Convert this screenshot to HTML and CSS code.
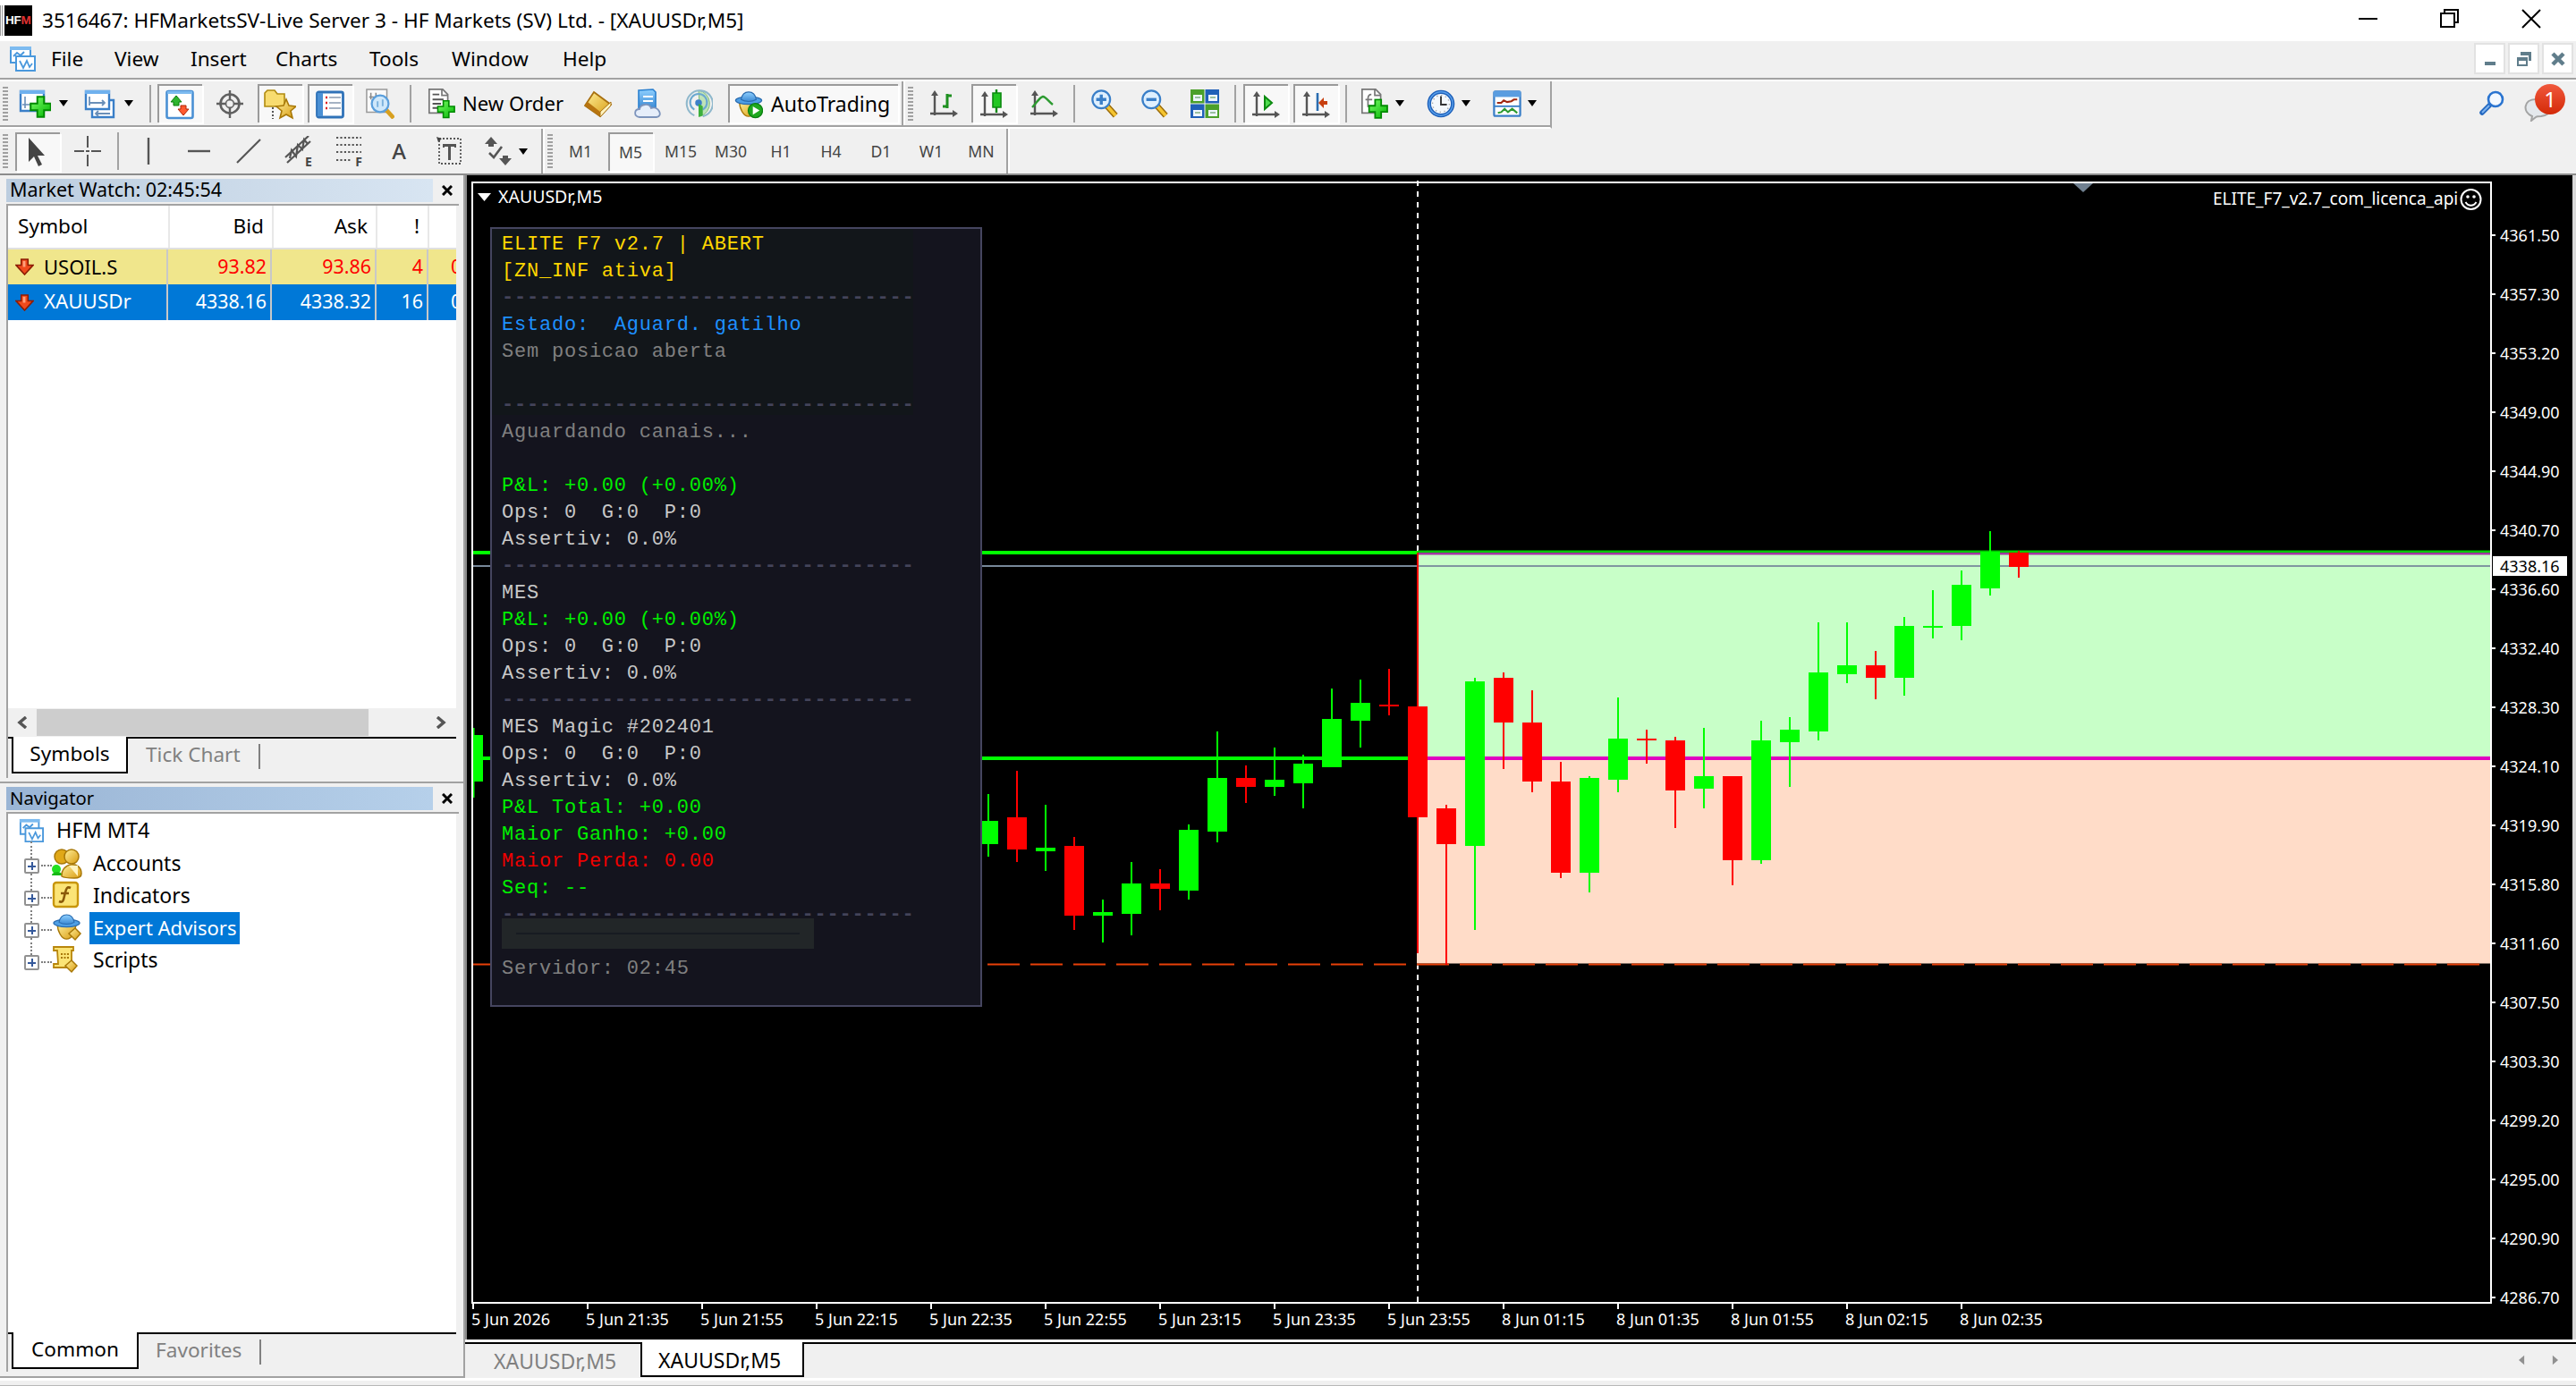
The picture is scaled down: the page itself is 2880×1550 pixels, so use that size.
FILE: index.html
```html
<!DOCTYPE html>
<html lang="en">
  <head>
    <meta charset="UTF-8" />
    <meta name="viewport" content="width=device-width, initial-scale=1.0" />
    <title>3516467: HFMarketsSV-Live Server 3</title>
    <link rel="stylesheet" href="styles.css">
  </head>

  <body>
    <!-- gradients and icons that are used more than once -->
    <svg class="defs" width="0" height="0">
      <defs>
        <linearGradient id="gold" x1="0" y1="0" x2="1" y2="1">
          <stop offset="0" stop-color="#fff09a" />
          <stop offset="1" stop-color="#d89a10" />
        </linearGradient>
        <linearGradient id="blue" x1="0" y1="0" x2="0" y2="1">
          <stop offset="0" stop-color="#8fd0ff" />
          <stop offset="1" stop-color="#3c8ad4" />
        </linearGradient>
        <linearGradient id="green" x1="0" y1="0" x2="1" y2="1">
          <stop offset="0" stop-color="#7dff6a" />
          <stop offset="1" stop-color="#00b400" />
        </linearGradient>
        <symbol id="i-plus" viewBox="0 0 20 20">
          <path d="M7 1h6v6h6v6h-6v6H7v-6H1V7h6z" fill="url(#green)" stroke="#008a00" stroke-width="1.6" />
        </symbol>
        <symbol id="i-app" viewBox="0 0 30 30">
          <path d="M2 2h22v17H2z" fill="#fff" stroke="#4a98dc" stroke-width="2" />
          <path d="M1 1h24v4H1z" fill="#7dbbf0" />
          <path d="M5 12l4-4 4 3 4-4" fill="none" stroke="#4a98dc" stroke-width="2" />
          <path d="M8 12h21v16H8z" fill="#fff" stroke="#4a98dc" stroke-width="2" />
          <path d="M12 17l4 8 4-8 3 7 3-4" fill="none" stroke="#4a98dc" stroke-width="1.8" />
        </symbol>
        <symbol id="i-axes" viewBox="0 0 32 32">
          <path d="M6 3v25M1 26h28" fill="none" stroke="#555" stroke-width="2.4" />
          <path d="M6 0l4 6H2zM32 26l-6-4v8z" fill="#555" />
        </symbol>
        <symbol id="i-down" viewBox="0 0 22 20">
          <path d="M7 1h8v7h6l-10 11L1 8h6z" fill="#ef4a1c" stroke="#8c1c04" stroke-width="1.6" />
          <path d="M9 3h3v7H9z" fill="#ffa07c" />
        </symbol>
        <symbol id="i-glass" viewBox="0 0 34 34">
          <path d="M20 20l10 11" stroke="#9a6a08" stroke-width="7" />
          <path d="M20 20l10 11" stroke="#f4c430" stroke-width="4" />
          <circle cx="13" cy="12" r="10.5" fill="#dff0ff" stroke="#3a7fc8" stroke-width="2.4" />
        </symbol>
        <symbol id="i-hat" viewBox="0 0 34 32">
          <path d="M6 12c0 9 5 18 11 18s11-9 11-18z" fill="url(#gold)" stroke="#a87808" stroke-width="1.4" />
          <ellipse cx="17" cy="11" rx="15.5" ry="4.5" fill="#4f9fe4" stroke="#2a6cb0" stroke-width="1.4" />
          <path d="M8 10c1-6 4-9 9-9s8 3 9 9c-5 3-13 3-18 0z" fill="url(#blue)" stroke="#2a6cb0" stroke-width="1.2" />
        </symbol>
      </defs>
    </svg>

    <div class="titlebar">
      <div class="app-logo">HF<b>M</b></div>
      <span class="window-title">3516467: HFMarketsSV-Live Server 3 - HF Markets (SV) Ltd. - [XAUUSDr,M5]</span>
      <div class="window-controls">
        <svg viewBox="0 0 22 22"><path d="M0 11h21" /></svg>
        <svg viewBox="0 0 22 22"><path d="M1 5h15v15H1zM5 5V1h15v14h-4" /></svg>
        <svg viewBox="0 0 22 22"><path d="M1 1l20 20M21 1L1 21" /></svg>
      </div>
    </div>

    <div class="menubar">
      <svg class="menu-icon"><use href="#i-app" /></svg>
      <ul class="menu">
        <li class="menu-file">File</li>
        <li class="menu-view">View</li>
        <li class="menu-insert">Insert</li>
        <li class="menu-charts">Charts</li>
        <li class="menu-tools">Tools</li>
        <li class="menu-window">Window</li>
        <li>Help</li>
      </ul>
      <div class="mdi-controls">
        <button><svg viewBox="0 0 16 16"><path d="M2 11h12v4H2z" /></svg></button>
        <button><svg viewBox="0 0 16 16"><path fill-rule="evenodd" d="M4 0h12v10h-3V4H4zM0 6h12v10H0zM2 10v4h8v-4z" /></svg></button>
        <button><svg viewBox="0 0 16 16"><path d="M2 2l12 12M14 2L2 14" stroke="#607d8b" stroke-width="4.5" /></svg></button>
      </div>
    </div>

    <div class="toolbar toolbar--main">
      <div class="tools tools--main">
        <i class="grip"></i>
        <button class="tool-drop tool-drop--first">
          <svg class="icon" viewBox="0 0 36 34">
            <path d="M2 3h26v22H2z" fill="#fff" stroke="#3a7fc8" stroke-width="2.4" /><path d="M1 2h28v4H1z" fill="#6fb1ee" />
            <path d="M7 9v13M4 18h16" stroke="#6a8fb8" stroke-width="1.6" />
            <use href="#i-plus" x="12" y="8" width="25" height="25" />
          </svg><i class="caret"></i>
        </button>
        <button class="tool-drop tool-drop--second">
          <svg class="icon" viewBox="0 0 36 34">
            <path d="M9 13h24v19H9z" fill="#fff" stroke="#3a7fc8" stroke-width="2.4" />
            <path d="M2 3h26v20H2z" fill="#fff" stroke="#3a7fc8" stroke-width="2.4" /><path d="M1 2h28v4H1z" fill="#6fb1ee" />
            <path d="M6 9v10M6 16h17M20 13l3 3-3 3M13 28h16M16 25l-3 3 3 3" fill="none" stroke="#6a8fb8" stroke-width="1.8" />
          </svg><i class="caret"></i>
        </button>
        <i class="sep sep--first"></i>
        <button class="tool tool--on">
          <svg class="icon" viewBox="0 0 32 34">
            <rect x="1.5" y="2" width="29" height="30" rx="2" fill="#fff" stroke="#4a90d4" stroke-width="2.6" /><path d="M2 2h28v3H2z" fill="#7dbbf0" />
            <path d="M12 7l6 7h-3v4H9v-4H6z" fill="#2fb52f" stroke="#0a7a0a" /><path d="M20 29l-6-7h3v-4h6v4h3z" fill="#ff5a30" stroke="#b02404" />
          </svg>
        </button>
        <button class="tool">
          <svg class="icon" viewBox="0 0 32 34">
            <circle cx="16" cy="17" r="10.5" fill="none" stroke="#606060" stroke-width="2.6" /><circle cx="16" cy="17" r="4.5" fill="none" stroke="#707070" stroke-width="1.8" />
            <path d="M16 2v11M16 21v12M1 17h11M20 17h11" stroke="#606060" stroke-width="2.4" />
          </svg>
        </button>
        <button class="tool tool--on">
          <svg class="icon icon--wide" viewBox="0 0 36 34">
            <path d="M1 4l3-3h8l3 4h8v14H1z" fill="#f8dc70" stroke="#b08a10" stroke-width="1.6" /><path d="M10 20v13" stroke="#444" stroke-width="1.8" stroke-dasharray="2 2" />
            <path d="M25 11l3 7 8 1-6 5 2 8-7-4-7 4 2-8-6-5 8-1z" fill="url(#gold)" stroke="#a87808" stroke-width="1.6" />
          </svg>
        </button>
        <button class="tool tool--on">
          <svg class="icon" viewBox="0 0 32 34">
            <rect x="1.5" y="3" width="29" height="28" rx="2" fill="#fff" stroke="#2f72b8" stroke-width="2.8" /><path d="M2 4h6v26H2z" fill="#4a90d4" />
            <path d="M11 9h2M11 15h2M11 21h2" stroke="#e02020" stroke-width="2.4" /><path d="M15 9h13M15 15h13M15 21h13" stroke="#8899b0" stroke-width="1.6" />
          </svg>
        </button>
        <button class="tool">
          <svg class="icon" viewBox="0 0 34 36">
            <path d="M1 1h24v27H1z" fill="#fafafa" stroke="#999" stroke-width="1.6" /><path d="M6 5v8M4 10h16M12 5v9" stroke="#888" stroke-width="1.6" />
            <path d="M24 25l9 10" stroke="#d8a020" stroke-width="5" /><circle cx="17" cy="18" r="10" fill="#cfe8fb" stroke="#5b9fdc" stroke-width="2.4" /><path d="M14 22v-7M20 21v-8" stroke="#7ab0dc" stroke-width="2" />
          </svg>
        </button>
        <i class="sep"></i>
        <button class="tool-order">
          <svg class="icon" viewBox="0 0 32 36">
            <path d="M1 1h16l6 6v22H1z" fill="#fff" stroke="#777" stroke-width="1.8" /><path d="M16 1v7h7" fill="none" stroke="#777" stroke-width="1.8" />
            <path d="M5 7h8M5 13h13M5 18h10M5 23h7" stroke="#555" stroke-width="2" />
            <use href="#i-plus" x="10" y="13" width="22" height="23" />
          </svg>
          New Order
        </button>
        <button class="tool">
          <svg class="icon" viewBox="0 0 32 34">
            <path d="M11 4l19 14-12 13L1 19z" fill="url(#gold)" stroke="#a87010" stroke-width="1.8" /><path d="M1 19l17 12v-5L4 15z" fill="#b87410" /><path d="M18 26l12-11v4L18 32z" fill="#fff3c0" stroke="#a87010" />
          </svg>
        </button>
        <button class="tool">
          <svg class="icon" viewBox="0 0 32 34">
            <path d="M5 2l16-1 3 3v18H5z" fill="url(#blue)" stroke="#2a80d0" stroke-width="1.6" /><path d="M10 9h11M10 14h11" stroke="#fff" stroke-width="2" />
            <path d="M6 32c-7-1-6-9 0-9 1-6 11-7 13-1 8-3 14 9 6 10z" fill="#e6eefa" stroke="#7d94bc" stroke-width="1.8" />
          </svg>
        </button>
        <button class="tool">
          <svg class="icon" viewBox="0 0 34 34">
            <path d="M17 1a16 16 0 0 1 2 31z" fill="#bfe3b8" stroke="#7dbb78" />
            <g fill="none" stroke-width="2.2"><path d="M12 31A15.5 15.5 0 1 1 22 32" stroke="#8fb8cc" /><path d="M12 24a10 10 0 1 1 10 0" stroke="#6aa8d0" /></g>
            <circle cx="17" cy="16" r="4" fill="#3c80c8" /><path d="M17 17v16l5-2V20z" fill="#3cb03c" />
          </svg>
        </button>
        <button class="tool-auto">
          <svg class="icon" viewBox="0 0 34 34">
            <use href="#i-hat" width="34" height="34" />
            <circle cx="25" cy="24" r="8.5" fill="#1fa81f" stroke="#0a8010" stroke-width="1.4" /><path d="M22 19l8 5-8 5z" fill="#fff" />
          </svg>
          AutoTrading
        </button>
        <i class="line"></i>
        <i class="grip"></i>
        <button class="tool tool--charts">
          <svg class="icon" viewBox="0 0 32 34"><use href="#i-axes" y="2" width="32" height="32" /><path d="M20 6v16M20 8h5M15 20h5" fill="none" stroke="#1e9020" stroke-width="3" /></svg>
        </button>
        <button class="tool tool--on">
          <svg class="icon" viewBox="0 0 32 34"><use href="#i-axes" y="2" width="32" height="32" /><path d="M19 0v26" stroke="#0c8a10" stroke-width="2.4" /><path d="M15 4h9v16h-9z" fill="#22c722" stroke="#0c8a10" stroke-width="1.6" /></svg>
        </button>
        <button class="tool">
          <svg class="icon" viewBox="0 0 32 34"><use href="#i-axes" y="2" width="32" height="32" /><path d="M3 21c5-5 8-11 12-12 3 0 6 5 11 9" fill="none" stroke="#2c9a30" stroke-width="2.4" /></svg>
        </button>
        <i class="sep"></i>
        <button class="tool"><svg class="icon" viewBox="0 0 34 34"><use href="#i-glass" width="34" height="34" /><path d="M7 12h12M13 6v12" stroke="#3a7fc8" stroke-width="3.6" /></svg></button>
        <button class="tool"><svg class="icon" viewBox="0 0 34 34"><use href="#i-glass" width="34" height="34" /><path d="M7 12h12" stroke="#3a7fc8" stroke-width="3.6" /></svg></button>
        <button class="tool">
          <svg class="icon" viewBox="0 0 32 34">
            <path d="M0 1h15.5v15.5H0zM16.5 17.5H32V33H16.5z" fill="#4ba02a" /><path d="M16.5 1H32v15.5H16.5zM0 17.5h15.5V33H0z" fill="#2060b8" />
            <path d="M3 7h10v7H3zM20 7h10v7H20zM3 24h10v7H3zM20 24h10v7H20z" fill="#eef6ff" /><path d="M5 10h6M22 10h6M5 27h6M22 27h6" stroke="#9ac0a0" stroke-width="2" />
          </svg>
        </button>
        <i class="sep"></i>
        <button class="tool tool--on"><svg class="icon" viewBox="0 0 32 34"><use href="#i-axes" y="2" width="32" height="32" /><path d="M15 8l8 7-8 7z" fill="#4fdc4f" stroke="#0c8a10" stroke-width="2" /></svg></button>
        <button class="tool tool--on"><svg class="icon" viewBox="0 0 32 34"><use href="#i-axes" y="2" width="32" height="32" /><path d="M18 4v20" stroke="#2a6cb0" stroke-width="2.6" /><path d="M19 15l6-6v4h4v4h-4v4z" fill="#c84010" /></svg></button>
        <i class="sep"></i>
        <button class="tool-drop">
          <svg class="icon" viewBox="0 0 32 36">
            <path d="M1 1h16l6 6v22H1z" fill="#fff" stroke="#777" stroke-width="1.8" /><path d="M16 1v7h7M12 7c-3 0-4 2-4 5v10M5 13h8" fill="none" stroke="#777" stroke-width="1.8" />
            <use href="#i-plus" x="8" y="12" width="24" height="24" />
          </svg><i class="caret"></i>
        </button>
        <button class="tool-drop">
          <svg class="icon" viewBox="0 0 34 34">
            <circle cx="17" cy="17" r="14" fill="#f4f8fc" stroke="#1d5fb8" stroke-width="4.5" /><circle cx="17" cy="17" r="14" fill="none" stroke="#5aa0ec" stroke-width="1.5" />
            <path d="M17 8v10h7" fill="none" stroke="#333" stroke-width="2" /><circle cx="17" cy="17" r="10" fill="none" stroke="#aaa" stroke-width="1.5" stroke-dasharray="1.5 3.7" />
          </svg><i class="caret"></i>
        </button>
        <button class="tool-drop">
          <svg class="icon" viewBox="0 0 34 34">
            <rect x="1.5" y="2.5" width="31" height="29" rx="1.5" fill="#fff" stroke="#3a7fc8" stroke-width="2.4" /><path d="M1 2h32v7H1z" fill="#5a9de0" /><path d="M2 20h30" stroke="#3a7fc8" stroke-width="2" />
            <path d="M5 16h5l3-3 4 2 5-1 3-2h4" fill="none" stroke="#a02810" stroke-width="2.2" /><path d="M6 28l4-1 4-4 4 4 5-4 6 5" fill="none" stroke="#2c9a30" stroke-width="2.2" />
          </svg><i class="caret"></i>
        </button>
      </div>
      <div class="toolbar-right">
        <svg class="search" viewBox="0 0 28 28"><path d="M3 25l9-9" stroke="#2468c0" stroke-width="5.5" stroke-linecap="round" /><path d="M3 25l8-8" stroke="#7db4f0" stroke-width="2" /><circle cx="18" cy="10" r="8" fill="#f4f9ff" stroke="#2a74d0" stroke-width="2.6" /></svg>
        <div class="chat">
          <svg viewBox="0 0 32 26"><path d="M9 20C-2 16-1 1 13 1h10c10 3 10 17-4 19-3 0-5 0-6 1l-5 4z" fill="#e4e8ec" stroke="#a4a4a4" stroke-width="2" /></svg>
          <span class="chat-badge">1</span>
        </div>
      </div>
    </div>

    <div class="toolbar toolbar--lines">
      <div class="tools tools--lines">
        <i class="grip"></i>
        <button class="tool tool--on tool--cursor"><svg class="icon" viewBox="0 0 32 34"><path d="M6 1v27l6-6 5 11 4-2-5-10h8z" fill="#444" /></svg></button>
        <button class="tool"><svg class="icon" viewBox="0 0 32 34"><path d="M16 0v13M16 21v13M1 17h11M20 17h11M14 17h4" stroke="#555" stroke-width="2" /></svg></button>
        <i class="sep"></i>
        <button class="tool"><svg class="icon" viewBox="0 0 32 34"><path d="M16 2v30" stroke="#555" stroke-width="2.4" /></svg></button>
        <button class="tool"><svg class="icon" viewBox="0 0 32 34"><path d="M4 17h25" stroke="#555" stroke-width="2.4" /></svg></button>
        <button class="tool"><svg class="icon" viewBox="0 0 32 34"><path d="M3 30L29 4" stroke="#555" stroke-width="2.2" /></svg></button>
        <button class="tool tool--lettered"><svg class="icon" viewBox="0 0 32 34"><path d="M1 24L27 0M3 30L29 6M6 25l2-9 5 7 2-13 5 5 2-11 4 5" fill="none" stroke="#555" stroke-width="2.2" /></svg><b>E</b></button>
        <button class="tool tool--lettered"><svg class="icon" viewBox="0 0 32 34"><path d="M2 2h28M2 10h28M2 18h28M2 27h17" stroke="#555" stroke-width="2.2" stroke-dasharray="2.2 2.2" /></svg><b>F</b></button>
        <button class="tool tool-letter">A</button>
        <button class="tool"><svg class="icon" viewBox="0 0 32 34"><path d="M5 3h24v28H5z" fill="none" stroke="#555" stroke-width="1.8" stroke-dasharray="2 2" /><path d="M2 1l6 2-4 4z" fill="#444" /><path d="M9 9h15v4h-2v-1h-4v15h-3V12h-4v1H9z" fill="#555" /></svg></button>
        <button class="tool-drop tool-drop--arrows">
          <svg class="icon" viewBox="0 0 32 34"><path d="M8 1l7 8h-4v3H5V9H1zM24 33l-7-8h4v-3h6v3h4z" fill="#555" /><path d="M6 19l5 5 9-12" fill="none" stroke="#555" stroke-width="2.6" /></svg><i class="caret"></i>
        </button>
        <i class="line"></i>
        <i class="grip"></i>
        <button class="tool tool--period tool--m1">M1</button>
        <button class="tool tool--period tool--on">M5</button>
        <button class="tool tool--period">M15</button>
        <button class="tool tool--period">M30</button>
        <button class="tool tool--period">H1</button>
        <button class="tool tool--period">H4</button>
        <button class="tool tool--period">D1</button>
        <button class="tool tool--period">W1</button>
        <button class="tool tool--period">MN</button>
        <i class="line"></i>
      </div>
    </div>

    <div class="workspace">
      <div class="sidebar">
        <section class="dock dock--market">
          <header class="dock-head">
            <h2>Market Watch: 02:45:54</h2>
            <svg class="dock-close" viewBox="0 0 12 12"><path d="M1 1l10 10M11 1L1 11" /></svg>
          </header>
          <div class="dock-body">
            <div class="quotes">
              <div class="quote quote--head"><span>Symbol</span><span>Bid</span><span>Ask</span><span>!</span><span></span></div>
              <div class="quote quote--down"><span><svg class="arrow"><use href="#i-down" /></svg>USOIL.S</span><span>93.82</span><span>93.86</span><span>4</span><span>0</span></div>
              <div class="quote quote--active"><span><svg class="arrow"><use href="#i-down" /></svg>XAUUSDr</span><span>4338.16</span><span>4338.32</span><span>16</span><span>0</span></div>
            </div>
            <div class="scrollbar">
              <svg viewBox="0 0 12 14"><path d="M10 1L3 7l7 6" /></svg>
              <div class="thumb"></div>
              <svg viewBox="0 0 12 14"><path d="M2 1l7 6-7 6" /></svg>
            </div>
            <div class="tabs tabs--market">
              <span class="tab tab--active">Symbols</span>
              <span class="tab">Tick Chart</span>
            </div>
          </div>
        </section>

        <section class="dock dock--navigator">
          <header class="dock-head dock-head--active">
            <h2>Navigator</h2>
            <svg class="dock-close" viewBox="0 0 12 12"><path d="M1 1l10 10M11 1L1 11" /></svg>
          </header>
          <div class="dock-body">
            <div class="tree">
              <div class="tree-root"><svg class="tree-app"><use href="#i-app" /></svg>HFM MT4</div>
              <div class="tree-item">
                <i class="expander"></i>
                <svg class="tree-icon" viewBox="0 0 34 34">
                  <circle cx="5" cy="23" r="5" fill="#22e022" /><path d="M0 30c0-5 12-5 12 0z" fill="#16b816" />
                  <circle cx="11" cy="9" r="8" fill="#e0a818" stroke="#a87808" stroke-width="1.5" /><circle cx="22" cy="9" r="8" fill="url(#gold)" stroke="#a87808" stroke-width="1.5" />
                  <path d="M11 31c-1-16 22-18 22-3 0 3-3 5-8 5s-11 0-14-2z" fill="url(#gold)" stroke="#a87808" stroke-width="1.5" /><path d="M19 19l10 12V19z" fill="#fff3c0" />
                </svg>
                <span>Accounts</span>
              </div>
              <div class="tree-item">
                <i class="expander"></i>
                <svg class="tree-icon" viewBox="0 0 34 34"><rect x="2" y="2" width="27" height="27" rx="3" fill="#fbe476" stroke="#c8960c" stroke-width="2.4" /><path d="M21 8c-4-2-5 1-6 5l-2 8c-1 3-3 3-5 2M10 14h9" fill="none" stroke="#8a5a08" stroke-width="2.6" /></svg>
                <span>Indicators</span>
              </div>
              <div class="tree-item">
                <i class="expander"></i>
                <svg class="tree-icon" viewBox="0 0 34 34"><use href="#i-hat" y="1" width="33" height="30" /><path d="M26 17l6 6-6 7-7-7z" fill="url(#gold)" stroke="#a87808" stroke-width="1.5" /></svg>
                <span class="selected">Expert Advisors</span>
              </div>
              <div class="tree-item">
                <i class="expander"></i>
                <svg class="tree-icon" viewBox="0 0 34 34"><path d="M2 2h22v4h-2v15l3 4H2v-4h5l-1-15H2z" fill="#fbe476" stroke="#b8860c" stroke-width="1.8" /><path d="M10 10h9M10 14h9" stroke="#a87808" stroke-width="2" stroke-dasharray="2 1.5" /><path d="M22 17l6 6-6 7-7-7z" fill="url(#gold)" stroke="#a87808" stroke-width="1.5" /></svg>
                <span>Scripts</span>
              </div>
            </div>
            <div class="tabs tabs--navigator">
              <span class="tab tab--active">Common</span>
              <span class="tab">Favorites</span>
            </div>
          </div>
        </section>
      </div>

      <div class="chart-area">
        <div class="chart-window">
          <svg class="chart" id="chart" viewBox="524 197 2352 1301"></svg>
          <div class="ea-panel">
            <p class="gold">ELITE F7 v2.7 | ABERT</p>
            <p class="gold">[ZN_INF ativa]</p>
            <p class="rule">---------------------------------</p>
            <p class="info">Estado:  Aguard. gatilho</p>
            <p class="muted">Sem posicao aberta</p>
            <p></p>
            <p class="rule">---------------------------------</p>
            <p class="muted">Aguardando canais...</p>
            <p></p>
            <p class="gain">P&amp;L: +0.00 (+0.00%)</p>
            <p>Ops: 0  G:0  P:0</p>
            <p>Assertiv: 0.0%</p>
            <p class="rule">---------------------------------</p>
            <p>MES</p>
            <p class="gain">P&amp;L: +0.00 (+0.00%)</p>
            <p>Ops: 0  G:0  P:0</p>
            <p>Assertiv: 0.0%</p>
            <p class="rule">---------------------------------</p>
            <p>MES Magic #202401</p>
            <p>Ops: 0  G:0  P:0</p>
            <p>Assertiv: 0.0%</p>
            <p class="gain">P&amp;L Total: +0.00</p>
            <p class="gain">Maior Ganho: +0.00</p>
            <p class="loss">Maior Perda: 0.00</p>
            <p class="gain">Seq: --</p>
            <p class="rule">---------------------------------</p>
            <div class="hidden-line"></div>
            <p class="muted">Servidor: 02:45</p>
          </div>
        </div>
        <div class="chart-tabs">
          <span class="chart-tab">XAUUSDr,M5</span>
          <span class="chart-tab chart-tab--active">XAUUSDr,M5</span>
          <div class="tab-scroll">
            <svg viewBox="0 0 8 12"><path d="M7 0v12L0 6z" /></svg>
            <svg viewBox="0 0 8 12"><path d="M1 0v12l7-6z" /></svg>
          </div>
        </div>
      </div>
    </div>

    <div class="statusbar"></div>

    <script src="script.js"></script>
  </body>
</html>
```
FILE: styles.css
```css
* {
  margin: 0;
  padding: 0;
  box-sizing: border-box;
}

body {
  width: 2880px;
  height: 1550px;
  overflow: hidden;
  display: flex;
  flex-direction: column;
  background-color: #f0f0f0;
  color: #000;
  font-family: "Noto Sans", sans-serif;
  font-size: 22.6px;
  line-height: 1;
}

button {
  background: none;
  border: none;
  font: inherit;
  color: inherit;
}

i {
  display: block;
  flex-shrink: 0;
}

svg {
  display: block;
  flex-shrink: 0;
}

.defs {
  position: absolute;
}

/* TITLE BAR */
.titlebar {
  height: 46px;
  background-color: #fff;
  display: flex;
  align-items: center;
}
.app-logo {
  width: 36px;
  height: 34px;
  padding-left: 6px;
  background: linear-gradient(90deg, #999 1px, #fff 1px 2px, #999 2px 3px, #fff 3px 5px, #000 5px);
  color: #fff;
  font-family: "Liberation Sans", sans-serif;
  font-size: 13.5px;
  font-weight: 700;
  line-height: 34px;
  letter-spacing: -0.3px;
}
.app-logo b {
  color: #e03030;
}
.window-title {
  margin-left: 11px;
}
.window-controls {
  margin-left: auto;
  padding: 0 39px 5px 0;
  display: flex;
  gap: 69px;
}
.window-controls svg {
  width: 22px;
  height: 22px;
  fill: none;
  stroke: #000;
  stroke-width: 2;
}

/* MENU */
.menubar {
  height: 45px;
  border-bottom: 2px solid #fff;
  box-shadow: inset 0 -2px 0 #a2a2a2;
  display: flex;
  align-items: center;
  padding: 0 3px 4px 10px;
}
.menu-icon {
  width: 30px;
  height: 30px;
}
.menu {
  display: flex;
  list-style: none;
  margin: 1px 0 0 17px;
}
.menu-file {
  width: 71px;
}
.menu-view {
  width: 85px;
}
.menu-insert {
  width: 95px;
}
.menu-charts {
  width: 105px;
}
.menu-tools {
  width: 92px;
}
.menu-window {
  width: 124px;
}
.mdi-controls {
  margin-left: auto;
  display: flex;
  gap: 3px;
}
.mdi-controls button {
  width: 35px;
  height: 35px;
  background-color: #fff;
  border: 2px solid #e2e2e2;
  display: flex;
  align-items: center;
  justify-content: center;
}
.mdi-controls svg {
  width: 16px;
  height: 16px;
  fill: #607d8b;
}

/* TOOLBARS */
.toolbar {
  display: flex;
  justify-content: space-between;
}
.toolbar--main {
  height: 53px;
}
.tools {
  display: flex;
  align-items: center;
}
.tools--main {
  width: 1735px;
  border-right: 2px solid #a2a2a2;
  border-bottom: 2px solid #fff;
  box-shadow: inset 0 -2px 0 #a2a2a2;
  padding-bottom: 2px;
}
.toolbar--lines {
  height: 52px;
  border-bottom: 2px solid #8c8c8c;
}
.tools--lines {
  font-size: 17.6px;
  color: #444;
}
.grip {
  width: 6px;
  height: 38px;
  margin: 0 2px 0 3px;
  background: repeating-linear-gradient(#a0a0a0 0 2px, transparent 2px 4px);
}
.sep {
  width: 2px;
  height: 42px;
  margin: 0 5px;
  background-color: #a2a2a2;
}
.sep--first {
  margin: 0 4px 0 8px;
}
.line {
  width: 2px;
  align-self: stretch;
  background-color: #a2a2a2;
  box-shadow: 2px 0 0 #fff;
}
.line + .grip {
  margin: 0 2px 0 5px;
}
.tool {
  width: 50px;
  height: 43px;
  margin: 0 3px;
  display: flex;
  align-items: center;
  justify-content: center;
  flex-shrink: 0;
}
.tool--on,
.tool-auto {
  background-color: #f8f8f8;
  border-top: 2px solid #9a9a9a;
  border-left: 2px solid #9a9a9a;
  box-shadow: 2px 2px 0 #fff;
}
.tool--on {
  padding-right: 2px;
}
.tool--charts {
  margin-left: 7px;
}
.tool--cursor {
  margin-left: 6px;
}
.tool--period {
  padding-top: 2px;
}
.tool--m1 {
  margin-left: 4px;
}
.tool--lettered b {
  width: 10px;
  margin: 24px 0 0 -10px;
  font-size: 14px;
}
.tool-drop {
  width: 74px;
  display: flex;
  align-items: center;
  gap: 7px;
  padding-left: 10px;
}
.tool-drop--first,
.tool-drop--second {
  gap: 9px;
}
.tool-drop--first .icon,
.tool-drop--second .icon {
  width: 36px;
}
.tool-drop--second {
  padding-left: 9px;
}
.tool-drop--arrows {
  padding-left: 11px;
  width: 75px;
}
.caret {
  border: 5.5px solid transparent;
  border-top: 7px solid #000;
  border-bottom: none;
}
.icon {
  width: 32px;
  height: 34px;
}
.icon--wide {
  width: 36px;
}
.tool-letter {
  font-size: 24px;
  font-weight: 500;
}
.tool-order,
.tool-auto {
  display: flex;
  align-items: center;
  white-space: nowrap;
}
.tool-order {
  width: 176px;
  gap: 7px;
  padding-left: 13px;
  font-size: 22.1px;
}
.tool-auto {
  width: 190px;
  height: 43px;
  margin: 0 4px 0 5px;
  gap: 9px;
  padding-left: 5px;
  font-size: 23px;
}
.toolbar-right {
  display: flex;
  padding-right: 12px;
  gap: 22px;
}
.search {
  width: 28px;
  height: 28px;
  margin-top: 10px;
}
.chat {
  width: 46px;
  height: 44px;
  position: relative;
}
.chat svg {
  width: 32px;
  height: 26px;
  margin-top: 19px;
}
.chat-badge {
  position: absolute;
  top: 3px;
  right: 0;
  width: 34px;
  height: 34px;
  border-radius: 50%;
  background: linear-gradient(#f0583c, #d42a08);
  color: #fff;
  font-size: 24px;
  line-height: 33px;
  text-align: center;
}

/* SIDEBAR */
.workspace {
  height: 1345px;
  display: flex;
}
.sidebar {
  width: 520px;
  border-right: 2px solid #a2a2a2;
  display: flex;
  flex-direction: column;
}
.dock {
  padding: 4px 5px 0 7px;
  display: flex;
  flex-direction: column;
}
.dock--market {
  height: 680px;
  border-bottom: 2px solid #a2a2a2;
}
.dock--navigator {
  height: 665px;
  border-bottom: 2px solid #a2a2a2;
  padding-bottom: 5px;
}
.dock-head {
  height: 26px;
  display: flex;
  align-items: center;
}
.dock-head h2 {
  width: 477px;
  height: 26px;
  padding-left: 4px;
  font-size: 21.5px;
  font-weight: 400;
  line-height: 24px;
  background: linear-gradient(90deg, #bccddf, #d8e5f2);
}
.dock-head--active h2 {
  font-size: 20.3px;
  background: linear-gradient(90deg, #9ab5d5, #b6d0ea);
}
.dock-close {
  width: 12px;
  height: 12px;
  margin-left: 10px;
  stroke: #000;
  stroke-width: 3;
}
.dock-body {
  flex: 1;
  margin-top: 2px;
  border-top: 2px solid #a2a2a2;
  border-left: 2px solid #a2a2a2;
  display: flex;
  flex-direction: column;
}
.dock--market .dock-body {
  margin-bottom: 4px;
}

/* MARKET WATCH */
.quotes {
  flex: 1;
  width: 501px;
  background-color: #fff;
}
.quote {
  height: 40px;
  display: grid;
  grid-template-columns: 179px 116px 117px 58px 31px;
  overflow: hidden;
}
.quote span {
  display: flex;
  align-items: center;
  justify-content: flex-end;
  padding: 0 4px 2px 0;
  border-right: 2px solid #c8c8c8;
}
.quote span:first-child {
  justify-content: flex-start;
  padding-left: 8px;
}
.quote span:last-child {
  padding: 0 0 2px 25px;
  justify-content: flex-start;
  border-right: none;
}
.quote--head {
  height: 49px;
  grid-template-columns: 181px 116px 116px 58px 30px;
  border-bottom: 2px solid #e0e0e0;
}
.quote--head span {
  border-color: #e8e8e8;
  padding: 0 9px 0 0;
}
.quote--head span:first-child {
  padding-left: 11px;
}
.quote--down {
  background-color: #f0e68c;
  color: #f00;
  font-size: 21.4px;
  height: 39px;
}
.quote--down span:first-child {
  color: #000;
  font-size: 22px;
}
.quote--active {
  background-color: #0078d7;
  color: #fff;
  font-size: 21.4px;
}
.quote--active span:first-child {
  font-size: 22.3px;
}
.arrow {
  width: 21px;
  height: 19px;
  margin: 2px 11px 0 0;
}
.scrollbar {
  height: 32px;
  display: flex;
  align-items: center;
}
.scrollbar svg {
  width: 12px;
  height: 14px;
  margin: 0 10px;
  fill: none;
  stroke: #555;
  stroke-width: 3.5;
}
.thumb {
  width: 371px;
  height: 30px;
  margin-right: 65px;
  background-color: #cdcdcd;
}
.tabs {
  display: flex;
  height: 46px;
  width: 501px;
  border-top: 2px solid #000;
}
.tabs--navigator {
  height: 44px;
}
.tab {
  color: #808080;
  height: 28px;
  margin: 6px 0 0 20px;
  padding: 1px 20px 0 0;
  border-right: 2px solid #808080;
}
.tab--active {
  width: 130px;
  height: 41px;
  margin: -2px 0 0 4px;
  padding: 8px 0 0;
  color: #000;
  text-align: center;
  background-color: #fff;
  border: 2px solid #000;
  border-top: none;
}
.tabs--navigator .tab {
  margin-left: 19px;
}
.tabs--navigator .tab--active {
  width: 142px;
  margin-left: 4px;
}

/* NAVIGATOR */
.tree {
  flex: 1;
  width: 501px;
  padding-left: 12px;
  background-color: #fff;
}
.tree-root {
  height: 38px;
  display: flex;
  align-items: center;
  gap: 14px;
  font-size: 23.4px;
}
.tree-app {
  width: 28px;
  height: 30px;
}
.tree-item {
  height: 36px;
  padding-left: 6px;
  display: flex;
  align-items: center;
  font-size: 23px;
}
.tree-item span {
  height: 36px;
  margin-left: 8px;
  padding: 6px 4px;
}
.tree-item .selected {
  background-color: #0078d7;
  color: #fff;
  font-size: 22px;
}
.tree-icon {
  width: 34px;
  height: 34px;
  margin-left: 14px;
}
.expander {
  position: relative;
  width: 17px;
  height: 17px;
  margin-top: 5px;
  border: 2px solid #919191;
  border-radius: 2px;
  background: linear-gradient(#35599b, #35599b) center / 9px 2px no-repeat,
    linear-gradient(#35599b, #35599b) center / 2px 9px no-repeat, #fff;
}
/* dotted branches of the tree */
.expander::before {
  content: "";
  position: absolute;
  left: 5px;
  top: -21px;
  height: 19px;
  border-left: 2px dotted #808080;
}
.expander::after {
  content: "";
  position: absolute;
  left: 17px;
  top: 5px;
  width: 12px;
  border-top: 2px dotted #808080;
}

/* CHART */
.chart-area {
  width: 2360px;
  display: flex;
  flex-direction: column;
}
.chart-window {
  position: relative;
  height: 1302px;
  padding: 1px 4px 0 4px;
  background: linear-gradient(90deg, #8c8c8c 2px, #000 2px 2356px, #d8d8d8 2356px);
}
.chart {
  width: 2352px;
  height: 1301px;
  background-color: #000;
}
.chart-label {
  font-size: 18px;
  fill: #fff;
}
.chart-title {
  font-size: 19.5px;
  fill: #fff;
}
.chart-expert {
  font-size: 19px;
  fill: #fff;
}

.ea-panel {
  position: absolute;
  left: 28px;
  top: 58px;
  width: 550px;
  height: 872px;
  padding: 2px 0 0 11px;
  background: linear-gradient(#12161a, #12161a) 0 0 / 471px 208px no-repeat, #14141e;
  border: 2px solid #45455f;
  color: #c8c8c8;
  font-family: "Liberation Mono", monospace;
  font-size: 22px;
  letter-spacing: 0.78px;
}
.ea-panel p {
  height: 30px;
  line-height: 31px;
  white-space: pre;
}
.ea-panel .gold {
  color: #ffd700;
}
.ea-panel .info {
  color: #1e90ff;
}
.ea-panel .muted {
  color: #808080;
}
.ea-panel .gain {
  color: #00f000;
}
.ea-panel .loss {
  color: #f00000;
}
.ea-panel .rule {
  color: #44445a;
  line-height: 29px;
  font-weight: 700;
}
.hidden-line {
  width: 349px;
  height: 34px;
  margin: -11px 0 7px 0;
  background: linear-gradient(#171b22, #171b22) center / 317px 2px no-repeat, #222628;
}

.chart-tabs {
  height: 43px;
  display: flex;
  border-top: 3px solid #fff;
  color: #808080;
  font-size: 23px;
}
.chart-tab {
  width: 196px;
  padding: 8px 0 0 32px;
  border-top: 2px solid #000;
}
.chart-tab--active {
  width: 183px;
  height: 39px;
  padding: 9px 0 0 18px;
  color: #000;
  background-color: #fff;
  border: 2px solid #000;
  border-top: none;
}
.tab-scroll {
  flex: 1;
  display: flex;
  justify-content: flex-end;
  align-items: center;
  gap: 30px;
  padding: 0 20px 3px 0;
  border-top: 2px solid #000;
}
.tab-scroll svg {
  width: 7px;
  height: 12px;
  fill: #909090;
}

.statusbar {
  height: 9px;
  border-top: 3px solid #fff;
  border-bottom: 1px solid #b8b8b8;
}
```
FILE: script.js
```js
const chart = document.getElementById('chart');
const UP = '#00ff00';
const DOWN = '#ff0000';
const FIRST_X = 1105;
const STEP = 32;

// [color, high, body top, body bottom, low]
const candles = [
  [UP, 888, 918, 944, 958],
  [DOWN, 862, 914, 950, 964],
  [UP, 900, 948, 952, 974],
  [DOWN, 936, 946, 1024, 1040],
  [UP, 1006, 1020, 1024, 1054],
  [UP, 964, 988, 1022, 1046],
  [DOWN, 972, 988, 994, 1018],
  [UP, 922, 928, 996, 1006],
  [UP, 818, 870, 930, 942],
  [DOWN, 856, 870, 880, 898],
  [UP, 836, 872, 880, 890],
  [UP, 844, 854, 876, 904],
  [UP, 770, 804, 858, 858],
  [UP, 760, 786, 806, 836],
  [DOWN, 748, 788, 790, 800],
  [DOWN, 618, 790, 914, 1066],
  [DOWN, 900, 904, 944, 1079],
  [UP, 758, 762, 946, 1040],
  [DOWN, 752, 758, 808, 860],
  [DOWN, 772, 808, 874, 886],
  [DOWN, 852, 874, 976, 982],
  [UP, 868, 870, 976, 998],
  [UP, 780, 826, 872, 886],
  [DOWN, 816, 826, 828, 854],
  [DOWN, 824, 828, 884, 926],
  [UP, 814, 868, 882, 904],
  [DOWN, 868, 868, 962, 990],
  [UP, 806, 828, 962, 966],
  [UP, 802, 816, 830, 880],
  [UP, 696, 752, 818, 828],
  [UP, 696, 744, 754, 764],
  [DOWN, 728, 744, 758, 782],
  [UP, 690, 700, 758, 778],
  [UP, 660, 700, 702, 714],
  [UP, 638, 654, 700, 716],
  [UP, 594, 617, 658, 666],
  [DOWN, 616, 618, 634, 646]
];

const prices = [
  '4361.50', '4357.30', '4353.20', '4349.00', '4344.90', '4340.70', '4336.60',
  '4332.40', '4328.30', '4324.10', '4319.90', '4315.80', '4311.60', '4307.50',
  '4303.30', '4299.20', '4295.00', '4290.90', '4286.70'
];
const times = [
  '5 Jun 2026', '5 Jun 21:35', '5 Jun 21:55', '5 Jun 22:15', '5 Jun 22:35',
  '5 Jun 22:55', '5 Jun 23:15', '5 Jun 23:35', '5 Jun 23:55', '8 Jun 01:15',
  '8 Jun 01:35', '8 Jun 01:55', '8 Jun 02:15', '8 Jun 02:35'
];

function rect(x, y, w, h, fill) {
  return `<rect x="${x}" y="${y}" width="${w}" height="${h}" fill="${fill}" />`;
}
function label(x, y, text, cls = 'chart-label', fill = '') {
  return `<text x="${x}" y="${y}" class="${cls}" ${fill && `style="fill: ${fill}"`}>${text}</text>`;
}

let out = '';

// day separator
out += '<path d="M1585 202V1456" stroke="#fff" stroke-width="2" stroke-dasharray="6 6" />';

// zones and levels
out += rect(1584, 617, 1201, 231, '#c8ffc8');
out += rect(1584, 850, 1201, 229, '#ffdcc8');
out += rect(529, 616, 1056, 4, UP);
out += rect(1585, 615.5, 1201, 2.5, '#00c800');
out += rect(1585, 618, 1200, 2.5, '#a038a0');
out += rect(529, 632, 1056, 2, '#778899');
out += rect(1585, 632, 1200, 2, '#8096a0');
out += rect(529, 846, 1056, 4, UP);
out += rect(1585, 846, 1200, 4, '#e000c0');
out += rect(1584, 1077.5, 1201, 2, '#000');
out += '<path d="M528 1078.5H2785" stroke="#e84008" stroke-width="2" stroke-dasharray="36 12" />';

// candle cut by the left border
out += rect(529, 814, 1.5, 78, UP) + rect(529, 822, 11, 52, UP);

candles.forEach(([color, high, top, bottom, low], i) => {
  const x = FIRST_X + i * STEP;
  out += rect(x - 1, high, 2, low - high, color);
  out += rect(x - 11, top, 22, bottom - top, color);
});

// frame
out += '<path d="M528 1457V204H2785V1457z" fill="none" stroke="#fff" stroke-width="2" />';

prices.forEach((price, i) => {
  const y = 263 + i * 66;
  out += rect(2786, y - 1, 4, 2, '#fff') + label(2795, y + 6.5, price);
});
out += rect(2787, 622, 83, 22, '#fff') + label(2795, 639.5, '4338.16', 'chart-label', '#000');

times.forEach((time, i) => {
  const x = 529 + i * 128;
  out += rect(x - 1, 1457, 2, 7, '#fff') + label(x - 2, 1481.5, time);
});

// captions
out += '<path d="M534 216h15l-7.5 9z" fill="#fff" />';
out += '<path d="M2318 205h22l-11 10z" fill="#708090" />';
out += label(557, 226.5, 'XAUUSDr,M5', 'chart-title');
out += label(2474, 228.5, 'ELITE_F7_v2.7_com_licenca_api', 'chart-expert');
out += '<g fill="none" stroke="#fff" stroke-width="2"><circle cx="2762.5" cy="223" r="11" /><path d="M2756.5 226c3 5 9 5 12 0" /></g>';
out += '<circle cx="2759" cy="220" r="1.8" fill="#fff" /><circle cx="2766" cy="220" r="1.8" fill="#fff" />';

chart.innerHTML = out;
```
